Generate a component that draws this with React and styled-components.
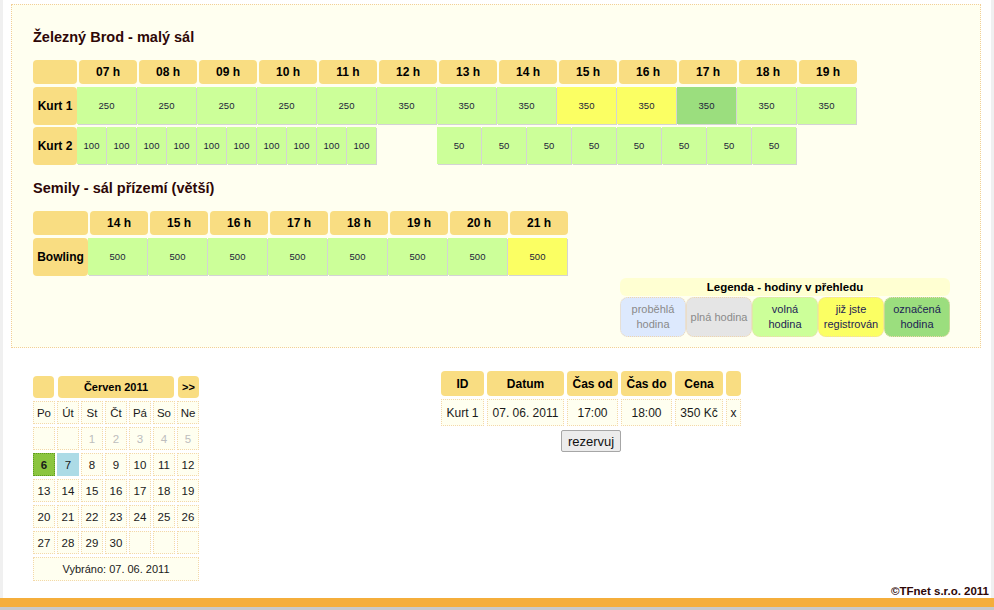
import React from 'react';
import styled, { createGlobalStyle } from 'styled-components';

const GlobalStyle = createGlobalStyle`
  html, body { margin: 0; padding: 0; }
  body {
    background: #f0f0f0;
    font-family: "Liberation Sans", Arial, sans-serif;
    color: #111;
  }
`;

const C = {
  head: '#f9dd82',
  free: '#ccff99',
  mine: '#fbff63',
  marked: '#9bde7e',
  past: '#dde9fd',
  full: '#e5e5e5',
  panel: '#fffff0',
  dot: '#f2cf98',
  title: '#2e0707',
};

const Container = styled.div`
  width: 988px;
  margin: 0 auto;
  background: #fff;
  padding-top: 4px;
`;

const Panel = styled.div`
  box-sizing: border-box;
  width: 970px;
  margin: 0 8px;
  background: ${C.panel};
  border: 1px dotted ${C.dot};
  padding: 22px 30px 10px 21px;
`;

const HallTitle = styled.h2`
  margin: 0 0 13px;
  font-size: 14.5px;
  line-height: 20px;
  font-weight: bold;
  color: ${C.title};
`;

const Table = styled.div`
  display: flex;
  flex-direction: column;
  gap: 2px;
  margin-bottom: ${(p) => (p.$last ? 0 : 13)}px;
`;

const HeadRow = styled.div`
  display: flex;
  gap: 2px;
  margin-bottom: 1px;
`;

const HeadCell = styled.div`
  flex-shrink: 0;
  width: ${(p) => p.$w}px;
  height: 24px;
  background: ${C.head};
  border-radius: 4px;
  display: flex;
  align-items: center;
  justify-content: center;
  font-weight: bold;
  font-size: 12px;
  color: #000;
`;

const DataRow = styled.div`
  display: flex;
`;

const RowLabel = styled.div`
  flex-shrink: 0;
  width: ${(p) => p.$w}px;
  height: 38px;
  background: ${C.head};
  border-radius: 4px;
  display: flex;
  align-items: center;
  justify-content: center;
  font-weight: bold;
  font-size: 12px;
  color: #000;
`;

const bg = { free: C.free, mine: C.mine, marked: C.marked };

const Slot = styled.div`
  flex-shrink: 0;
  width: ${(p) => p.$w}px;
  height: 37px;
  margin-right: 1px;
  background: ${(p) => (p.$state ? bg[p.$state] : 'transparent')};
  box-shadow: ${(p) => (p.$state ? '1px 1px 0 #d4d4d4' : 'none')};
  display: flex;
  align-items: center;
  justify-content: center;
  font-size: 9.5px;
  color: #1c1c3a;
`;

const LegendWrap = styled.div`
  display: flex;
  justify-content: flex-end;
  margin-top: 2px;
`;

const Legend = styled.div`
  width: 330px;
`;

const LegendTitle = styled.div`
  height: 18px;
  background: #ffffd2;
  border-radius: 6px;
  display: flex;
  align-items: center;
  justify-content: center;
  font-weight: bold;
  font-size: 11.5px;
  color: #000;
  margin-bottom: 1px;
`;

const LegendItems = styled.div`
  display: flex;
`;

const LegendItem = styled.div`
  box-sizing: border-box;
  width: 66px;
  height: 40px;
  border: 1px dotted #f0d6ad;
  border-radius: 8px;
  background: ${(p) => p.$bg};
  color: ${(p) => (p.$muted ? '#8a8a8a' : '#1c1c55')};
  display: flex;
  align-items: center;
  justify-content: center;
  text-align: center;
  font-size: 11px;
  line-height: 15px;
`;

const Bottom = styled.div`
  display: flex;
  padding: 23px 8px 0 30px;
`;

const Calendar = styled.div`
  width: 166px;
  margin-top: 5px;
`;

const CalHead = styled.div`
  display: flex;
  gap: 4px;
  margin-bottom: 3px;
`;

const CalHeadCell = styled.div`
  width: ${(p) => p.$w}px;
  height: 22px;
  background: ${C.head};
  border-radius: 4px;
  display: flex;
  align-items: center;
  justify-content: center;
  font-weight: bold;
  font-size: 11px;
  color: #000;
`;

const CalGrid = styled.div`
  display: grid;
  grid-template-columns: repeat(7, 22px);
  grid-auto-rows: 23px;
  column-gap: 2px;
  row-gap: 3px;
`;

const dayBg = { today: '#8bc53f', sel: '#acdbe6' };

const Day = styled.div`
  box-sizing: border-box;
  border: 1px dotted ${(p) => (p.$kind === 'today' ? '#5e9a1e' : p.$kind === 'sel' ? '#acdbe6' : '#f3d8aa')};
  background: ${(p) => dayBg[p.$kind] || C.panel};
  display: flex;
  align-items: center;
  justify-content: center;
  font-size: 11.5px;
  font-weight: ${(p) => (p.$kind === 'today' ? 'bold' : 'normal')};
  color: ${(p) => (p.$off ? '#bdbdbd' : '#1a1a1a')};
`;

const Selected = styled(Day)`
  grid-column: 1 / -1;
  height: 24px;
  font-size: 11px;
`;

const ResCol = styled.div`
  flex: 1;
  display: flex;
  flex-direction: column;
  align-items: center;
`;

const ResTable = styled.div`
  display: grid;
  grid-template-columns: 43px 77px 51px 51px 48px 15px;
  grid-template-rows: 25px 27px;
  column-gap: 3px;
  row-gap: 3px;
`;

const ResHead = styled.div`
  background: ${C.head};
  border-radius: 4px;
  display: flex;
  align-items: center;
  justify-content: center;
  font-weight: bold;
  font-size: 12px;
  color: #000;
`;

const ResCell = styled.div`
  box-sizing: border-box;
  border: 1px dotted #f3d8aa;
  background: ${C.panel};
  display: flex;
  align-items: center;
  justify-content: center;
  font-size: 12px;
  color: #1a1a1a;
`;

const Button = styled.button`
  margin-top: 4px;
  width: 60px;
  height: 22px;
  padding: 0;
  background: #ececec;
  border: 1px solid #a6a6a6;
  border-radius: 2px;
  font-family: "Liberation Sans", Arial, sans-serif;
  font-size: 13px;
  color: #111;
`;

const Copyright = styled.div`
  margin-top: 4px;
  padding-right: 2px;
  text-align: right;
  font-weight: bold;
  font-size: 11.5px;
  line-height: 14px;
  color: ${C.title};
`;

const FooterBar = styled.div`
  height: 9px;
  background: #f5ae3b;
  border-bottom: 3px solid #c9c9c9;
`;

const rep = (n, v) => Array.from({ length: n }, () => ({ ...v }));

const halls = [
  {
    name: 'Železný Brod - malý sál',
    labelW: 44,
    hours: ['07', '08', '09', '10', '11', '12', '13', '14', '15', '16', '17', '18', '19'],
    rows: [
      {
        label: 'Kurt 1',
        slots: [
          ...rep(5, { span: 1, price: 250, state: 'free' }),
          ...rep(3, { span: 1, price: 350, state: 'free' }),
          ...rep(2, { span: 1, price: 350, state: 'mine' }),
          { span: 1, price: 350, state: 'marked' },
          ...rep(2, { span: 1, price: 350, state: 'free' }),
        ],
      },
      {
        label: 'Kurt 2',
        slots: [
          ...rep(10, { span: 0.5, price: 100, state: 'free' }),
          { span: 1 },
          ...rep(8, { span: 0.75, price: 50, state: 'free' }),
        ],
      },
    ],
  },
  {
    name: 'Semily - sál přízemí (větší)',
    labelW: 55,
    hours: ['14', '15', '16', '17', '18', '19', '20', '21'],
    rows: [
      {
        label: 'Bowling',
        slots: [
          ...rep(7, { span: 1, price: 500, state: 'free' }),
          { span: 1, price: 500, state: 'mine' },
        ],
      },
    ],
  },
];

const legend = [
  { text: ['proběhlá', 'hodina'], bg: C.past, muted: true },
  { text: ['plná hodina'], bg: C.full, muted: true },
  { text: ['volná', 'hodina'], bg: C.free },
  { text: ['již jste', 'registrován'], bg: C.mine },
  { text: ['označená', 'hodina'], bg: C.marked },
];

const dayNames = ['Po', 'Út', 'St', 'Čt', 'Pá', 'So', 'Ne'];
const days = [
  null, null, 1, 2, 3, 4, 5,
  6, 7, 8, 9, 10, 11, 12,
  13, 14, 15, 16, 17, 18, 19,
  20, 21, 22, 23, 24, 25, 26,
  27, 28, 29, 30, null, null, null,
];

function Hall({ hall, last }) {
  return (
    <>
      <HallTitle>{hall.name}</HallTitle>
      <Table $last={last}>
        <HeadRow>
          <HeadCell $w={hall.labelW} />
          {hall.hours.map((h) => (
            <HeadCell key={h} $w={58}>{h} h</HeadCell>
          ))}
        </HeadRow>
        {hall.rows.map((r) => (
          <DataRow key={r.label}>
            <RowLabel $w={hall.labelW}>{r.label}</RowLabel>
            {r.slots.map((s, i) => (
              <Slot key={i} $w={s.span * 60 - 1} $state={s.state}>
                {s.price}
              </Slot>
            ))}
          </DataRow>
        ))}
      </Table>
    </>
  );
}

export default function App() {
  return (
    <>
      <GlobalStyle />
      <Container>
        <Panel>
          {halls.map((h, i) => (
            <Hall key={h.name} hall={h} last={i === halls.length - 1} />
          ))}
          <LegendWrap>
            <Legend>
              <LegendTitle>Legenda - hodiny v přehledu</LegendTitle>
              <LegendItems>
                {legend.map((l) => (
                  <LegendItem key={l.text.join()} $bg={l.bg} $muted={l.muted}>
                    <span>
                      {l.text.map((t, i) => (
                        <React.Fragment key={t}>
                          {i > 0 && <br />}
                          {t}
                        </React.Fragment>
                      ))}
                    </span>
                  </LegendItem>
                ))}
              </LegendItems>
            </Legend>
          </LegendWrap>
        </Panel>
        <Bottom>
          <Calendar>
            <CalHead>
              <CalHeadCell $w={21} />
              <CalHeadCell $w={116}>Červen 2011</CalHeadCell>
              <CalHeadCell $w={21}>&gt;&gt;</CalHeadCell>
            </CalHead>
            <CalGrid>
              {dayNames.map((d) => (
                <Day key={d}>{d}</Day>
              ))}
              {days.map((d, i) => (
                <Day
                  key={i}
                  $off={d !== null && d < 6}
                  $kind={d === 6 ? 'today' : d === 7 ? 'sel' : undefined}
                >
                  {d}
                </Day>
              ))}
              <Selected>Vybráno: 07. 06. 2011</Selected>
            </CalGrid>
          </Calendar>
          <ResCol>
            <ResTable>
              <ResHead>ID</ResHead>
              <ResHead>Datum</ResHead>
              <ResHead>Čas od</ResHead>
              <ResHead>Čas do</ResHead>
              <ResHead>Cena</ResHead>
              <ResHead />
              <ResCell>Kurt 1</ResCell>
              <ResCell>07. 06. 2011</ResCell>
              <ResCell>17:00</ResCell>
              <ResCell>18:00</ResCell>
              <ResCell>350 Kč</ResCell>
              <ResCell>x</ResCell>
            </ResTable>
            <Button type="button">rezervuj</Button>
          </ResCol>
        </Bottom>
        <Copyright>©TFnet s.r.o. 2011</Copyright>
      </Container>
      <FooterBar />
    </>
  );
}
